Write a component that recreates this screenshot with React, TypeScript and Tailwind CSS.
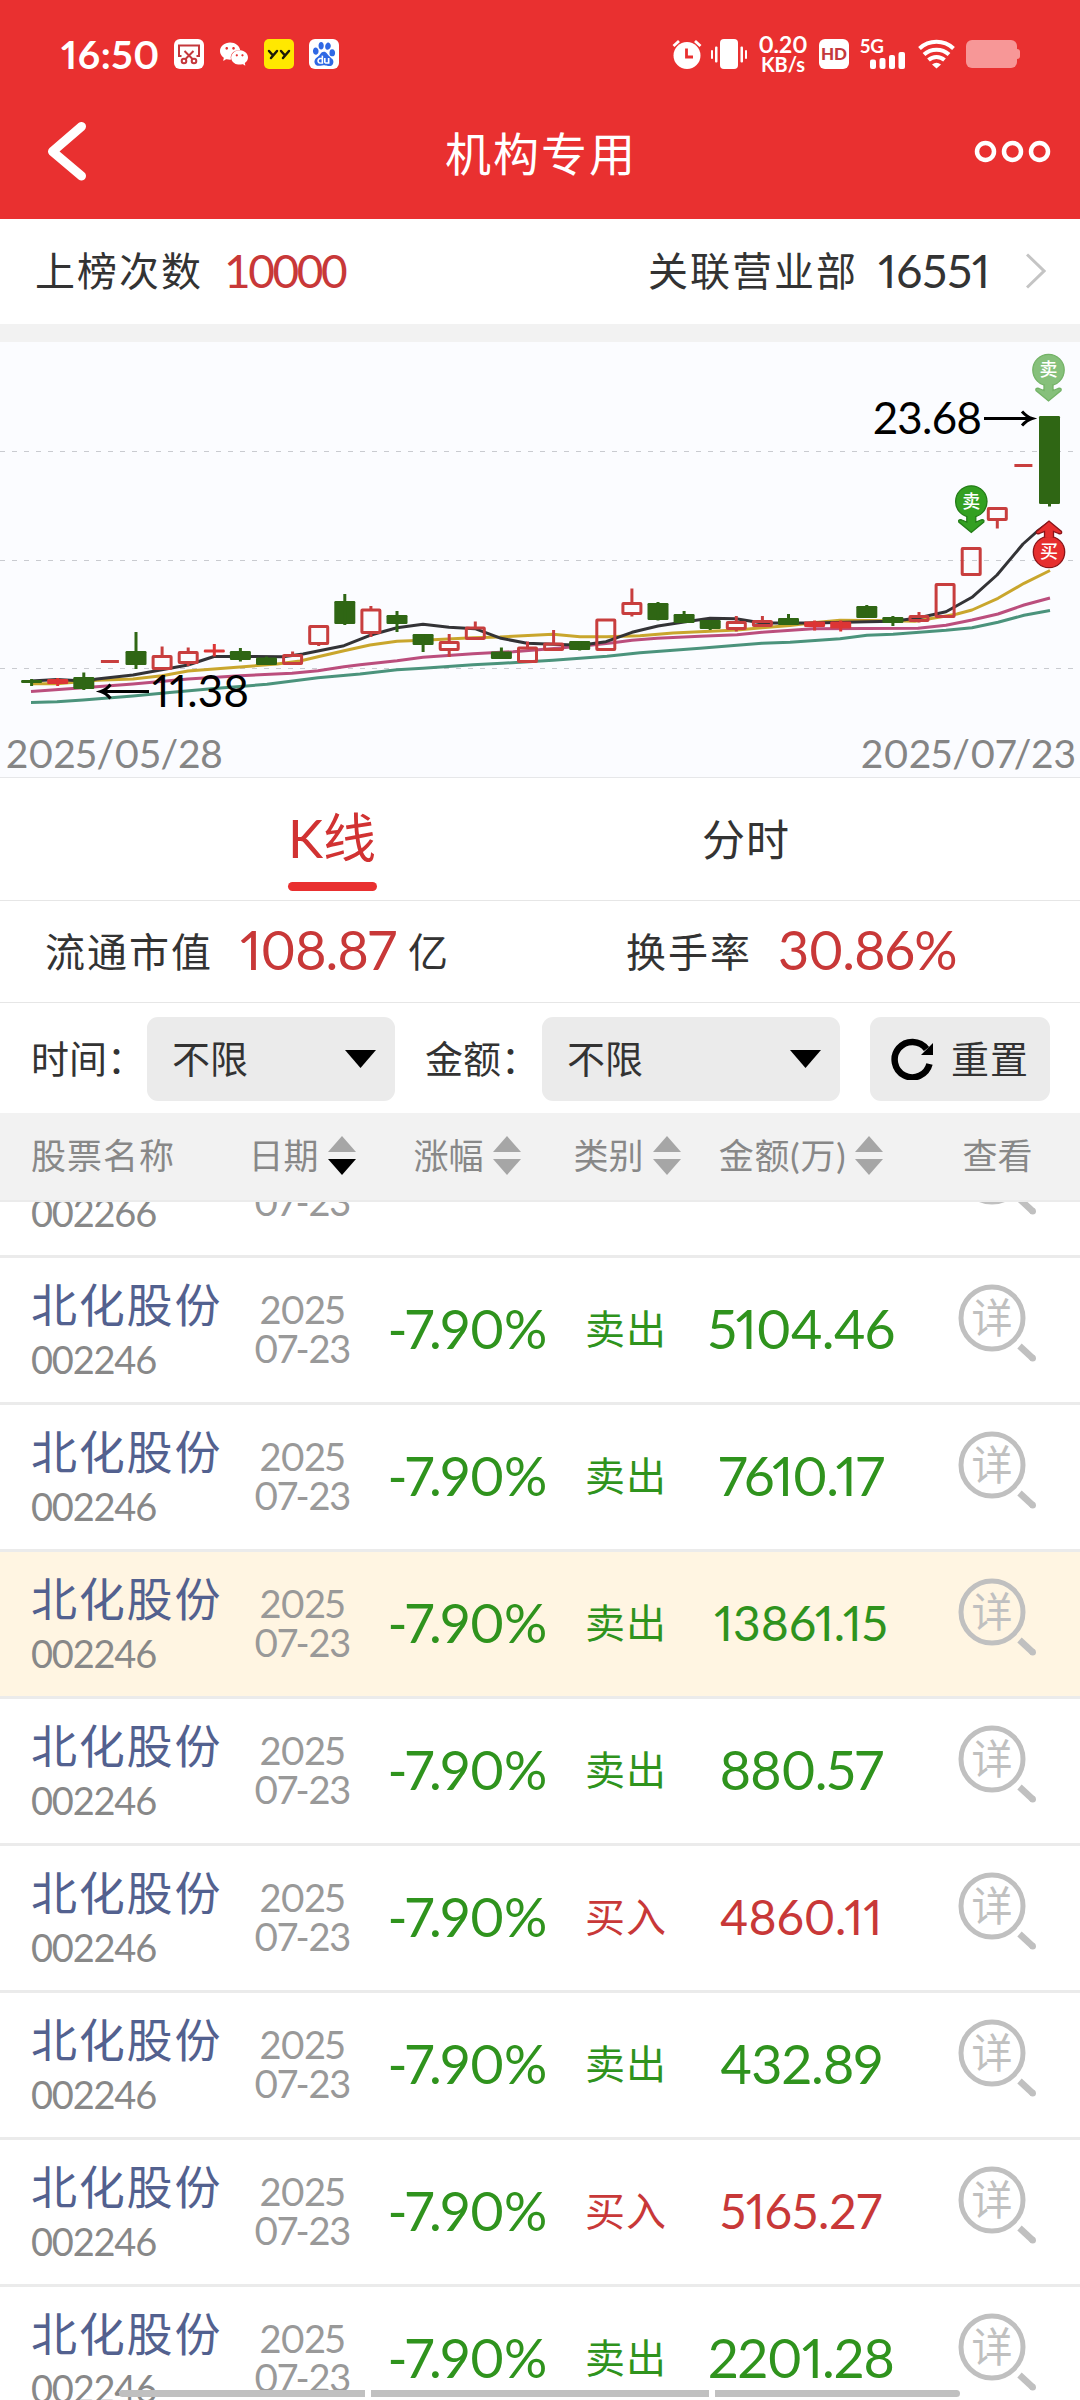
import React, { useState } from 'react';
import { SiBaidu, SiWechat } from 'react-icons/si';

type Trade = {
  name: string;
  code: string;
  year: string;
  day: string;
  change: string;
  side?: 'buy' | 'sell';
  amount: string;
};

const base = { name: '北化股份', code: '002246', year: '2025', day: '07-23', change: '-7.90%' };

const trades: Trade[] = [
  // scrolled almost out of view, only its last line shows
  { name: '', code: '002266', year: '', day: '07-23', change: '', amount: '' },
  { ...base, side: 'sell', amount: '5104.46' },
  { ...base, side: 'sell', amount: '7610.17' },
  { ...base, side: 'sell', amount: '13861.15' },
  { ...base, side: 'sell', amount: '880.57' },
  { ...base, side: 'buy', amount: '4860.11' },
  { ...base, side: 'sell', amount: '432.89' },
  { ...base, side: 'buy', amount: '5165.27' },
  { ...base, side: 'sell', amount: '2201.28' },
];

// kind, body top, body bottom, wick top, wick bottom
type Candle = ['up' | 'down' | 'flat' | 'dash', number, number, number, number];

const candles: Candle[] = [
  ['down', 680, 683, 679, 686],
  ['flat', 679, 684, 678, 686],
  ['down', 677, 689, 672.5, 690],
  ['dash', 660, 663, 660, 663],
  ['down', 651, 665, 632, 669],
  ['up', 655, 670, 646.5, 670],
  ['up', 651, 664, 647.5, 666],
  ['flat', 649.5, 652.5, 644, 656.5],
  ['down', 651, 660, 648, 661.5],
  ['down', 657.5, 665, 656.5, 665],
  ['up', 654, 665, 651.5, 665],
  ['up', 625, 645, 625, 646],
  ['down', 601, 624, 594, 625],
  ['up', 608.5, 634, 606, 637],
  ['down', 615, 624, 611, 632],
  ['down', 634, 645, 634, 652],
  ['up', 641, 651, 634, 657],
  ['up', 626.5, 640, 621.5, 640],
  ['down', 651.5, 659, 647.5, 659],
  ['up', 646.5, 663, 641.5, 663],
  ['up', 642.5, 651, 630, 651],
  ['down', 641, 650, 641, 650.5],
  ['up', 618.5, 651, 618.5, 651],
  ['up', 602, 615, 588.5, 616.5],
  ['down', 603, 620, 602, 620.5],
  ['down', 614, 623, 611, 623],
  ['down', 620, 629, 620, 630],
  ['up', 621, 630, 616, 631.5],
  ['up', 620, 627, 616, 627],
  ['down', 618, 625, 614, 625],
  ['flat', 621.5, 627, 620.5, 630.5],
  ['flat', 621.5, 628.5, 620.5, 631.5],
  ['down', 606, 618, 605, 618],
  ['down', 617, 623, 616, 626],
  ['up', 615, 622, 612, 622.5],
  ['up', 583, 618, 583, 618],
  ['up', 547, 576, 547, 576],
  ['up', 507, 521, 507, 528.5],
  ['dash', 464, 467, 464, 467],
  ['down', 416, 504, 416, 506.5],
];

const averages = [
  {
    color: '#4b937c',
    points:
      '31,702.5 57,701.7 83,700 133,696 167,692.7 214,688.5 267,684.3 318,677.7 360,674 397,669.7 423,668.3 473,664.7 502,663.3 553,660.3 607,656.3 640,652.7 700,648.3 737,645.3 762,643.3 790,642.3 840,638.7 867,635.3 893,634.3 946,630.3 972,627.7 998,622.3 1024,615.3 1050,610.5',
  },
  {
    color: '#bb4e7d',
    points:
      '31,691.5 83,687.7 133,684 188,679 240,675.7 292,673.3 318,670.7 344,666.7 360,664.7 397,660.7 423,657.3 473,653.7 513,651.7 557,648.3 590,645.3 613,642.7 632,640.3 657,638.3 700,636.3 737,634.7 762,632.3 813,628.7 918,628.3 946,625.3 972,620 998,614 1024,605 1050,598',
  },
  {
    color: '#c9a62d',
    points:
      '31,683.7 57,683.7 97,680.3 133,679 162,675.7 188,671 214,669 240,667 277,664 300,661 318,656.7 344,650.7 370,645 397,641.3 423,640.3 473,637.7 500,637 553,634.3 580,636.7 607,636.7 640,635.7 673,633 710,631.3 737,630 762,627.7 790,625.5 813,622.7 840,620.3 893,620.7 915,621.3 946,616 957,614 972,610 998,598.3 1024,583.3 1050,570.5',
  },
  {
    color: '#333336',
    points:
      '31,681 57,679.5 84,681 97,679 133,675 188,665 214,656.5 283,656.7 303,654 344,645.7 370,635.3 397,627.7 423,624.3 449,627.3 475,628.7 501,638.3 527,643.3 567,644.7 582,645 606,641.7 632,632.3 658,626 684,622 710,618.3 736,618.7 762,623 814,623 867,621.7 893,621.3 918,618 946,611.7 972,597.3 997,575 1023,544 1037,531.5 1050,522',
  },
];

const CandleShape = ({ candle, index }: { candle: Candle; index: number }) => {
  const [kind, top, bottom, wickTop, wickBottom] = candle;
  const x = 31.6 + index * 26.1;
  if (kind === 'dash') {
    return <rect x={x - 9} y={top} width={18} height={3} fill="#c83e3e" />;
  }
  if (kind === 'up') {
    return (
      <g stroke="#c83e3e" strokeWidth={3}>
        <rect x={x - 9} y={top + 1.5} width={18} height={bottom - top - 3} rx={0.5} fill="none" />
        {wickTop < top && <path d={`M${x} ${wickTop}V${top + 1}`} />}
        {wickBottom > bottom && <path d={`M${x} ${bottom - 1}V${wickBottom}`} />}
      </g>
    );
  }
  const color = kind === 'down' ? '#2f6614' : '#dc3535';
  return (
    <g fill={color}>
      <rect x={x - 10.5} y={top} width={21} height={bottom - top} rx={1.2} />
      <rect x={x - 1.5} y={wickTop} width={3} height={wickBottom - wickTop} />
    </g>
  );
};

const Marker = ({ x, y, side, faded }: { x: number; y: number; side: 'buy' | 'sell'; faded?: boolean }) => {
  const buy = side === 'buy';
  const fill = buy ? '#e62e2e' : faded ? '#86c07b' : '#33a022';
  const stroke = buy ? '#8a1418' : faded ? '#73b266' : '#237c17';
  return (
    <g transform={`translate(${x} ${y})`}>
      <g transform={buy ? 'scale(1 -1)' : undefined} fill={fill} stroke={stroke} strokeWidth={1.3}>
        <circle r={15.7} />
        <path d="M-4.500 14.500V20.500L-9.500 18.500Q-13.500 17.500 -12.500 20.500L0 31L12.500 20.500Q13.500 17.500 9.500 18.500L4.500 20.500V14.500" />
      </g>
      <text y={6.3} textAnchor="middle" fontSize={18} fontWeight={500} fill="#fff">
        {buy ? '买' : '卖'}
      </text>
    </g>
  );
};

const StatusBar = () => (
  <div className="flex h-[108px] items-center justify-between pl-[61px] pr-[60px]">
    <div className="flex items-center">
      <span className="w-[113px] text-[39px] font-bold leading-none tracking-[0.6px]">16:50</span>
      <svg width="30" height="30" viewBox="0 0 30 30" fill="none" stroke="#c4383c" strokeWidth="2">
        <rect width="30" height="30" rx="6" fill="#fff" stroke="none" />
        <path d="M7.500 17H5V6.500H25V17H22.500M10.500 12L19 20.500M19.500 12L11 20.500" />
        <circle cx="10" cy="22" r="2.300" />
        <circle cx="20" cy="22" r="2.300" />
      </svg>
      <SiWechat className="ml-4 h-[28px] w-[28px]" />
      <svg className="ml-4" width="30" height="30" viewBox="0 0 30 30" fill="none" stroke="#1c1a08" strokeWidth="2.500" strokeLinecap="round">
        <rect width="30" height="30" rx="5" fill="#ffe800" stroke="none" />
        <path d="M5 12L9 16.500M13 12L7 19M17 12L21 16.500M25 12L19 19" />
      </svg>
      <span className="ml-[15px] flex h-[30px] w-[30px] items-center justify-center rounded-[6px] bg-white text-[#2f68e4]">
        <SiBaidu className="h-[24px] w-[24px]" />
      </span>
    </div>
    <div className="flex items-center">
      <svg width="30" height="30" viewBox="0 0 30 30" fill="none" stroke="#fff" strokeWidth="2.800">
        <circle cx="15" cy="16.500" r="13.500" fill="#fff" stroke="none" />
        <path d="M1.500 7L7 2M28.500 7L23 2" />
        <path d="M14.500 9.500V18H21" stroke="#e93030" />
      </svg>
      <svg className="ml-[9px]" width="36" height="30" viewBox="0 0 36 30" fill="#fff">
        <rect x="9" width="18" height="30" rx="4" />
        <rect x="0" y="11" width="2" height="9" rx="1" />
        <rect x="4" y="7.500" width="2.500" height="16" rx="1" />
        <rect x="29.500" y="7.500" width="2.500" height="16" rx="1" />
        <rect x="34" y="11" width="2" height="9" rx="1" />
      </svg>
      <div className="ml-[11px] flex w-[50px] flex-col items-center whitespace-nowrap font-bold">
        <span className="text-[23px] leading-[20px]">0.20</span>
        <span className="text-[20px] leading-[20px]">KB/s</span>
      </div>
      <span className="ml-[11px] flex h-[30px] w-[30px] items-center justify-center rounded-[6px] bg-white text-[17px] font-black text-[#c4383c]">
        HD
      </span>
      <svg className="ml-[11px]" width="46" height="32" viewBox="0 0 46 32" fill="#fff">
        <text x="0" y="15" fontSize="19" fontWeight="700" textLength="24" lengthAdjust="spacingAndGlyphs">5G</text>
        <rect x="10" y="21.500" width="6" height="9.500" rx="2" />
        <rect x="19.500" y="20" width="6" height="11" rx="2" />
        <rect x="29" y="17" width="6" height="14" rx="2" />
        <rect x="38.500" y="14" width="6.500" height="17" rx="2" />
      </svg>
      <svg className="ml-3" width="37" height="30" viewBox="0 0 37 30" fill="none" stroke="#fff" strokeWidth="4">
        <path d="M1.500 9.500A25 25 0 0 1 35.500 9.500" />
        <path d="M6 15.500A18.500 18.500 0 0 1 31 15.500" />
        <path d="M10.500 21A12 12 0 0 1 26.500 21" />
        <path d="M18.500 29.500L14 25.500Q18.500 22 23 25.500Z" fill="#fff" stroke="none" />
      </svg>
      <span className="ml-[11px] h-[28px] w-[51px] rounded-[6px] bg-[#f79797]" />
      <span className="h-[10px] w-[3px] rounded-r bg-[#f79797]" />
    </div>
  </div>
);

const TitleBar = () => (
  <div className="flex h-[111px] items-center justify-between pb-[26px] pl-[47px] pr-[29px]">
    <svg width="124" height="60" viewBox="0 0 124 60" fill="none" stroke="#fff" strokeWidth="9" strokeLinecap="round" strokeLinejoin="round">
      <path d="M34.500 5.500L5.500 30.500L34.500 55" />
    </svg>
    <h1 className="pr-4 pt-[6px] text-[46px] leading-none tracking-[2px]">机构专用</h1>
    <svg width="124" height="60" viewBox="0 0 124 60" fill="none" stroke="#fff" strokeWidth="4.500">
      <circle cx="58.500" cy="30.500" r="8.500" />
      <circle cx="85.500" cy="30.500" r="8.500" />
      <circle cx="112.500" cy="30.500" r="8.500" />
    </svg>
  </div>
);

const Chart = () => (
  <svg className="block h-[435px] w-full bg-[#fbfcff]" viewBox="0 342 1080 435">
    <g stroke="#c9cbd0" strokeDasharray="5 7">
      <path d="M0 451.500H1080M0 560.500H1080M0 668.500H1080" />
    </g>
    {averages.map((line) => (
      <polyline key={line.color} points={line.points} fill="none" stroke={line.color} strokeWidth={3} strokeLinejoin="round" />
    ))}
    {candles.map((candle, i) => (
      <CandleShape key={i} candle={candle} index={i} />
    ))}
    <g stroke="#000" strokeWidth={3} fill="none">
      <path d="M101 691.500H149M110.500 684.500Q106 690 101 691.500Q106 693 110.500 698.500" />
      <path d="M984 418.500H1032M1022 411.500Q1027 417 1032 418.500Q1027 420 1022 425.500" />
    </g>
    <g fontSize={44} fill="#000">
      <text x={152} y={706.5} textLength={97}>11.38</text>
      <text x={873} y={434} textLength={109}>23.68</text>
    </g>
    <g fontSize={39} fill="#858585">
      <text x={6} y={768} textLength={217}>2025/05/28</text>
      <text x={861} y={768} textLength={215}>2025/07/23</text>
    </g>
    <Marker x={1048.5} y={370} side="sell" faded />
    <Marker x={971.3} y={501.5} side="sell" />
    <Marker x={1049} y={552} side="buy" />
  </svg>
);

const Select = ({ className }: { className: string }) => (
  <button className={`flex h-[84px] items-center justify-between rounded-[11px] bg-[#ebebeb] pl-[25px] pr-[19px] ${className}`}>
    <span className="pb-[2px] text-[38px] leading-none">不限</span>
    <svg width="31" height="18" viewBox="0 0 31 18">
      <path d="M0 0H31L15.500 18Z" />
    </svg>
  </button>
);

const Sorter = ({ active }: { active?: boolean }) => (
  <svg className="ml-[9px]" width="28" height="39" viewBox="0 0 28 39" fill="#a6a6a6">
    <path d="M0 16L14 0L28 16Z" />
    <path d="M0 23H28L14 39Z" fill={active ? '#000' : '#a6a6a6'} />
  </svg>
);

const DetailIcon = () => (
  <svg width="79" height="79" viewBox="0 0 79 79" fill="none" stroke="#c0c0c0">
    <circle cx="34" cy="34" r="31" strokeWidth="5" />
    <path d="M61.500 62L75 74.500" strokeWidth="6.500" />
    <circle cx="74.700" cy="74.300" r="3.250" fill="#c0c0c0" stroke="none" />
    <text x="34" y="49" textAnchor="middle" fontSize="41" fill="#c0c0c0" stroke="none">
      详
    </text>
  </svg>
);

const Row = ({ trade, selected, onClick }: { trade: Trade; selected: boolean; onClick: () => void }) => {
  const color = trade.side === 'buy' ? 'text-[#c83838]' : 'text-[#2f931d]';
  // long figures and purchases are set smaller
  const small = trade.side === 'buy' || trade.amount.length > 7;
  return (
    <div
      onClick={onClick}
      className={`flex h-[147px] shrink-0 items-center border-b-[3px] border-[#ebebeb] pb-[3px] ${selected ? 'bg-[#fff5e2]' : 'bg-white'}`}
    >
      <div className="w-[232px] pl-[31px] pt-[6px]">
        <div className="h-[54px] whitespace-nowrap text-[46px] leading-[54px] tracking-[1.8px] text-[#53618f]">{trade.name}</div>
        <div className="h-[54px] text-[38px] leading-[54px] tracking-[-1.2px] tabular-nums text-[#888]">{trade.code}</div>
      </div>
      <div className="w-[140px] text-center text-[38px] leading-[39px] tracking-[-1px] text-[#999]">
        <div className="h-[39px]">{trade.year}</div>
        <div className="h-[39px]">{trade.day}</div>
      </div>
      <div className="w-[190px] text-center text-[54px] leading-none tracking-[-0.7px] text-[#2f931d]">{trade.change}</div>
      <div className={`w-[128px] text-center text-[40px] leading-none tracking-[1px] ${color}`}>
        {trade.side && (trade.side === 'buy' ? '买入' : '卖出')}
      </div>
      <div className={`w-[222px] text-center leading-none ${color} ${small ? 'text-[48px]' : 'text-[54px] tracking-[-1px]'}`}>
        {trade.amount}
      </div>
      <div className="flex flex-1 justify-center pb-[10px] pl-[3px]">
        <DetailIcon />
      </div>
    </div>
  );
};

const App = () => {
  const [tab, setTab] = useState('k');
  const [selected, setSelected] = useState(3);

  return (
    <div className="relative flex h-[2400px] w-[1080px] flex-col overflow-hidden bg-white font-[Lato,'Noto_Sans_CJK_SC',sans-serif] text-[#333] proportional-nums">
      <header className="h-[219px] shrink-0 bg-[#e93030] text-white">
        <StatusBar />
        <TitleBar />
      </header>

      <section className="flex h-[105px] shrink-0 items-center pb-[2px] pl-[35px] pr-[34px] text-[40px] leading-none">
        <span className="tracking-[2px]">上榜次数</span>
        <span className="ml-[21px] text-[46px] tracking-[-2.4px] tabular-nums text-[#c83838]">10000</span>
        <span className="ml-auto tracking-[2px]">关联营业部</span>
        <span className="ml-[20px] w-[112px] whitespace-nowrap text-[46px]">16551</span>
        <svg className="ml-[36px]" width="20" height="36" viewBox="0 0 20 36" fill="none" stroke="#c4c4c4" strokeWidth="3">
          <path d="M1 1.500L18 18L1 34.500" />
        </svg>
      </section>
      <div className="h-[18px] shrink-0 bg-[#f2f2f2]" />

      <section className="h-[436px] shrink-0 border-b border-[#e6e7e9]">
        <Chart />
      </section>

      <nav className="flex h-[123px] shrink-0 justify-center border-b border-[#e6e6e6] pr-[2px] leading-none">
        <button onClick={() => setTab('k')} className="flex w-[414px] flex-col items-center">
          <span className={tab === 'k' ? 'mt-[33px] h-[71px] text-[53px] text-[#d13232]' : 'mt-[40px] h-[64px] text-[43px] tracking-[1px]'}>K线</span>
          {tab === 'k' && <span className="h-[9px] w-[89px] rounded-full bg-[#e93030]" />}
        </button>
        <button onClick={() => setTab('t')} className="flex w-[414px] flex-col items-center">
          <span className={tab === 't' ? 'mt-[33px] h-[71px] text-[53px] text-[#d13232]' : 'mt-[40px] h-[64px] text-[43px] tracking-[1px]'}>分时</span>
          {tab === 't' && <span className="h-[9px] w-[89px] rounded-full bg-[#e93030]" />}
        </button>
      </nav>

      <section className="flex h-[102px] shrink-0 items-center border-b border-[#e6e6e6] pl-[45px] text-[40px] leading-none">
        <div className="flex w-[581px] items-center">
          <span className="w-[195px] tracking-[2px]">流通市值</span>
          <span className="w-[168px] pb-1 text-[54px] tracking-[-1px] text-[#c83838]">108.87</span>
          <span>亿</span>
        </div>
        <span className="w-[152px] tracking-[2px]">换手率</span>
        <span className="pb-1 text-[54px] tracking-[-1px] text-[#c83838]">30.86%</span>
      </section>

      <section className="flex h-[110px] shrink-0 items-center pl-[31px] pt-[2px] text-[38px] leading-none">
        <span className="w-[116px] whitespace-nowrap pb-[2px]">时间：</span>
        <Select className="w-[248px]" />
        <span className="ml-[30px] w-[117px] whitespace-nowrap pb-[2px]">金额：</span>
        <Select className="w-[298px]" />
        <button className="ml-[30px] flex h-[84px] w-[180px] items-center rounded-[11px] bg-[#ebebeb] pl-[21px]">
          <svg width="42" height="42" viewBox="0 0 42 42" fill="none" stroke="#000" strokeWidth="6.500">
            <path d="M38.500 26A17.700 17.700 0 1 1 35.500 11" />
            <path d="M42 5V17H30Z" fill="#000" stroke="none" />
          </svg>
          <span className="ml-[18px] pb-[2px] tracking-[1px]">重置</span>
        </button>
      </section>

      <div className="flex h-[89px] shrink-0 items-center border-b-2 border-[#ebebeb] bg-[#f2f2f2] pb-[3px] text-[35px] leading-[48px] text-[#888]">
        <span className="w-[232px] pl-[31px] tracking-[1px]">股票名称</span>
        <span className="flex w-[140px] items-center justify-center">日期<Sorter active /></span>
        <span className="flex w-[190px] items-center justify-center">涨幅<Sorter /></span>
        <span className="flex w-[128px] items-center justify-center pl-[2px]">类别<Sorter /></span>
        <span className="flex w-[222px] items-center justify-center tracking-[0.8px]">金额(万)<Sorter /></span>
        <span className="flex-1 pl-[3px] text-center">查看</span>
      </div>

      <main className="flex min-h-0 flex-1 flex-col overflow-hidden">
        <div className="-mt-[91px] flex flex-col">
          {trades.map((trade, i) => (
            <Row key={i} trade={trade} selected={i === selected} onClick={() => setSelected(i)} />
          ))}
        </div>
      </main>

      {/* system gesture bar */}
      <div className="absolute bottom-[3px] left-[119px] flex w-[841px] gap-[6px]">
        <span className="h-[7px] w-[246px] rounded-l-full bg-[#c0c0c0]" />
        <span className="h-[7px] w-[338px] bg-[#c0c0c0]" />
        <span className="h-[7px] flex-1 rounded-r-full bg-[#c0c0c0]" />
      </div>
    </div>
  );
};

export default App;
